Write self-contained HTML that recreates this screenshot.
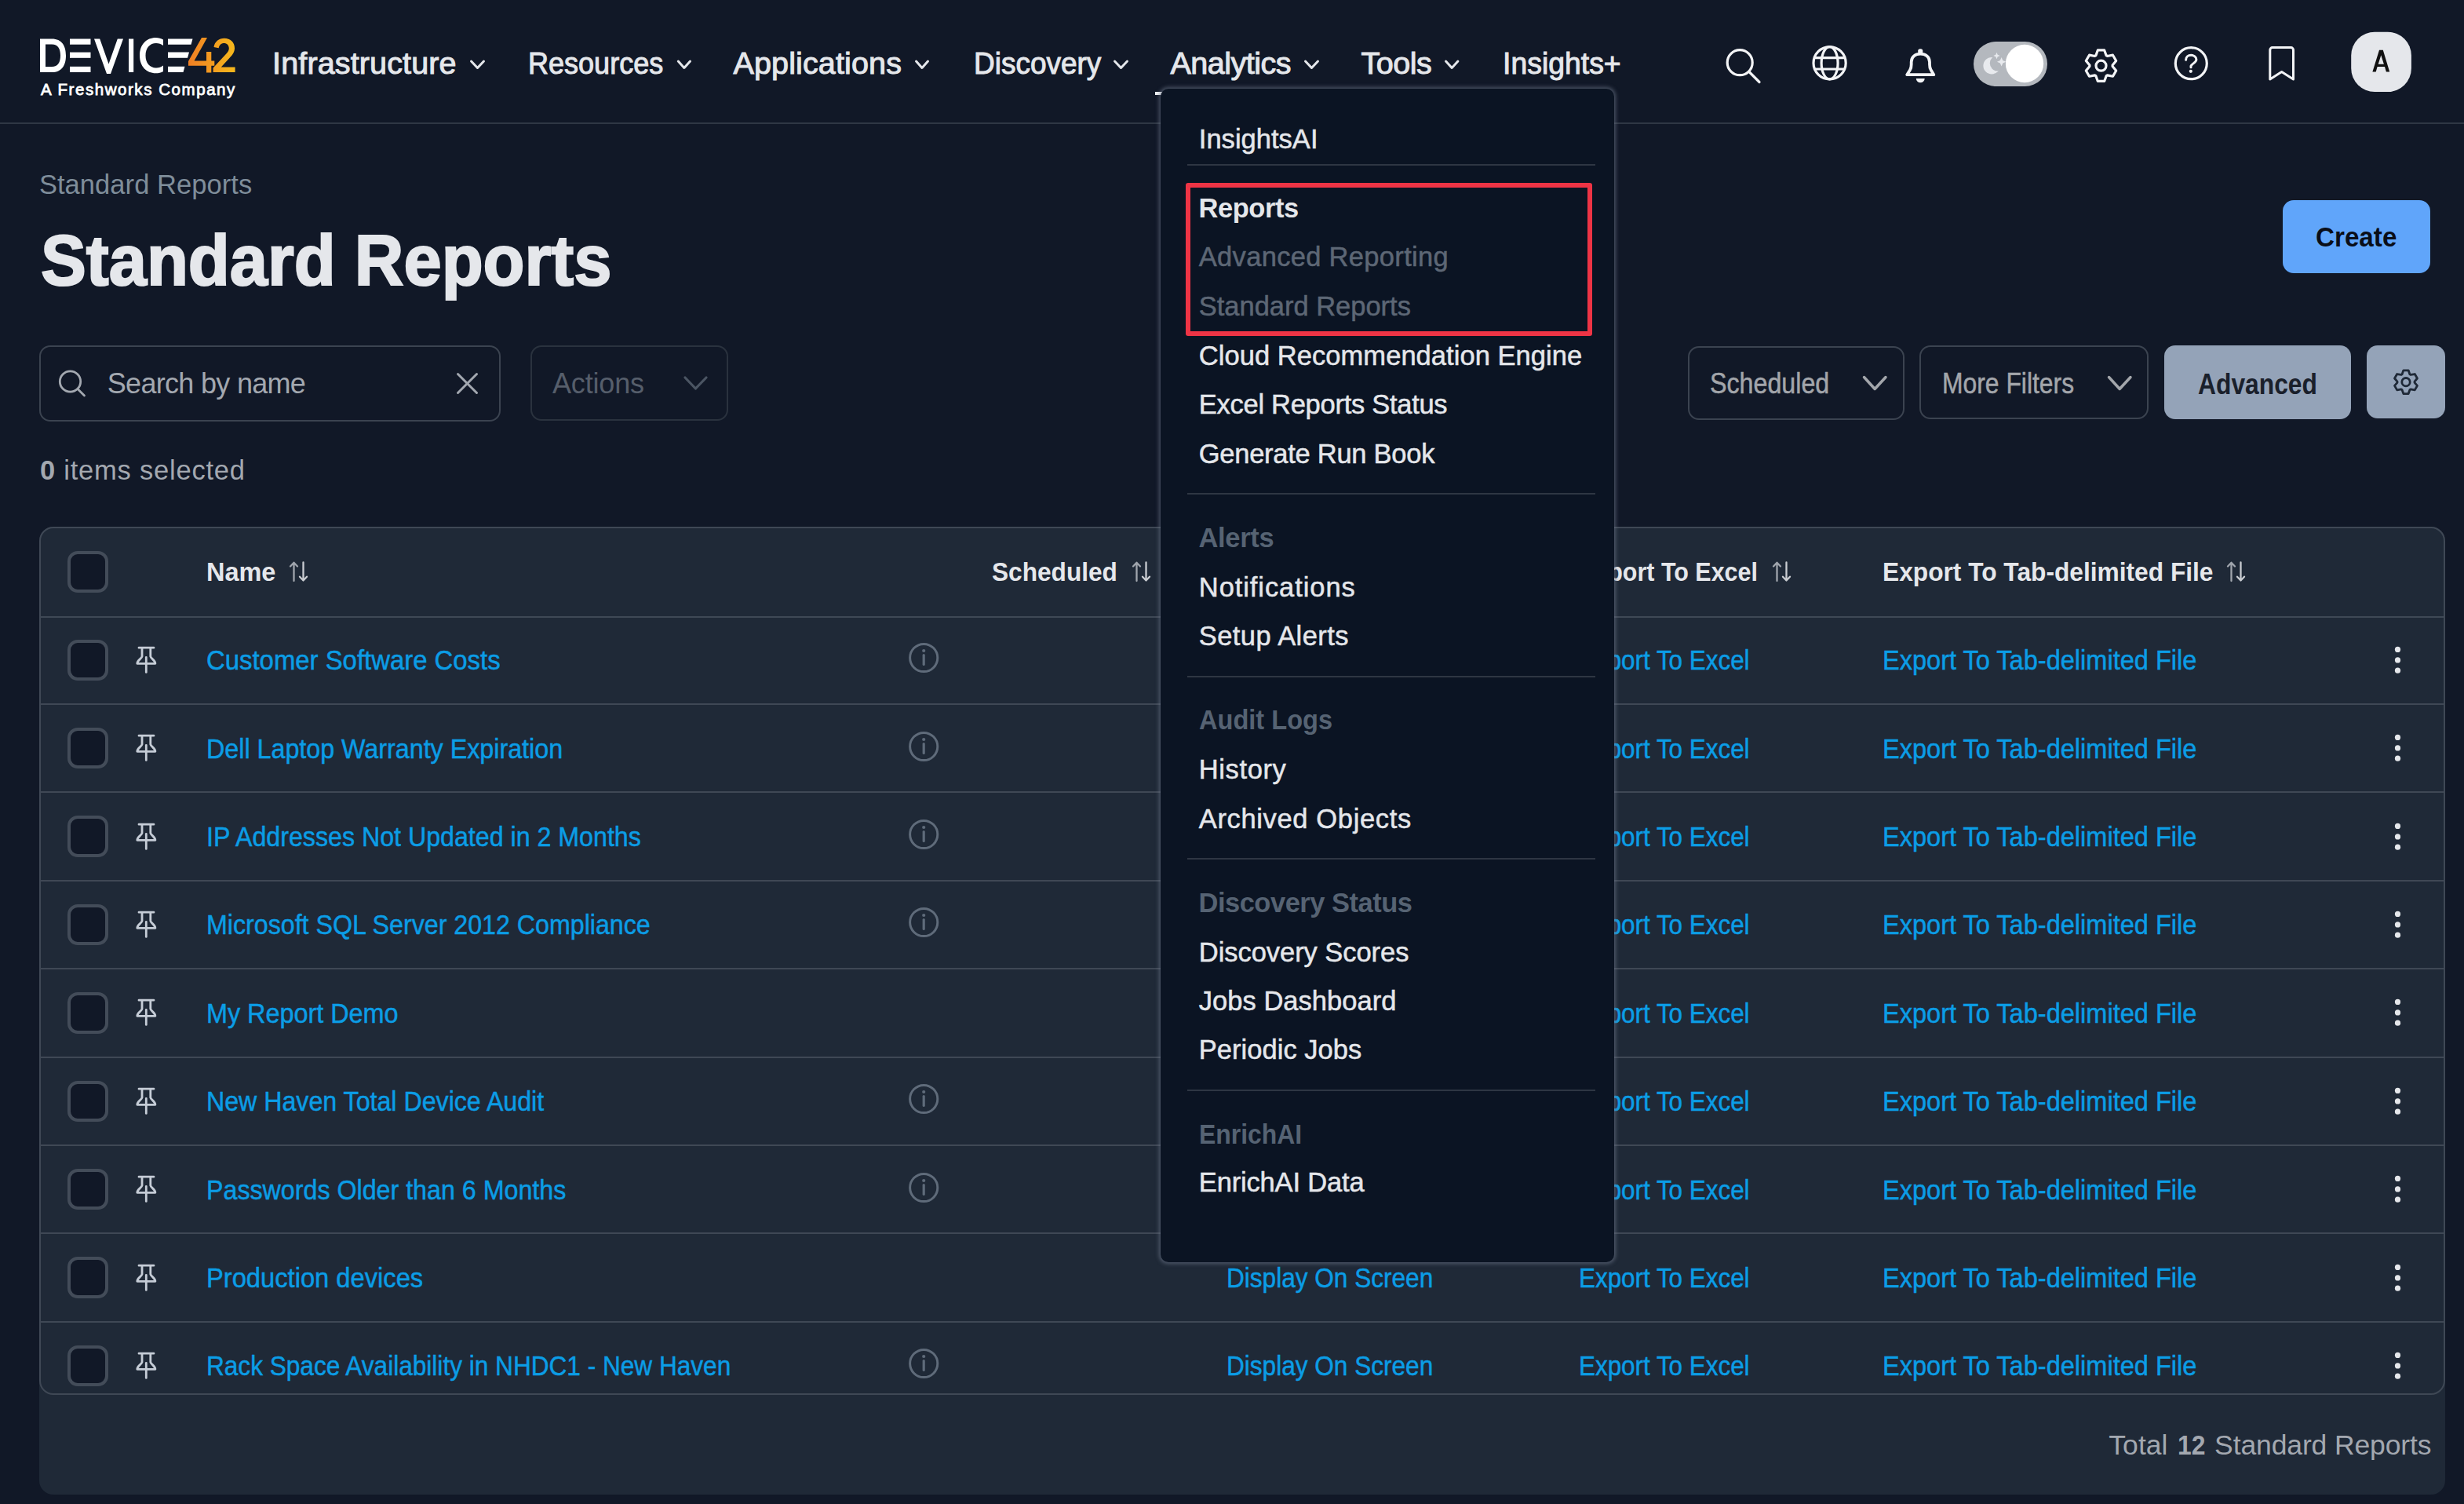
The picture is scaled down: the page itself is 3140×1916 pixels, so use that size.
<!DOCTYPE html>
<html><head><meta charset="utf-8"><title>Standard Reports</title>
<style>
html,body{margin:0;padding:0}
body{width:3140px;height:1916px;overflow:hidden;position:relative;background:#111827;font-family:"Liberation Sans",sans-serif}
.t{position:absolute;white-space:nowrap}
.a{position:absolute}
svg.a{overflow:visible}
</style></head><body>
<div style="position:absolute;left:0;top:156px;width:3140px;height:2px;background:#2f3744"></div>
<svg style="position:absolute;left:0;top:0" width="320" height="140" viewBox="0 0 320 140">
<defs><linearGradient id="lg" x1="0" y1="0" x2="1" y2="0"><stop offset="0" stop-color="#f07f24"/><stop offset="1" stop-color="#f6b81c"/></linearGradient></defs>
<path fill="#fff" d="M51 49.5h15c13 0 18 9 18 21.2s-5 21.3-18 21.3H51zM58 56.5v28.5h8c8 0 11-6 11-14.3s-3-14.2-11-14.2z"/>
<rect fill="#fff" x="89" y="49.5" width="26.5" height="7.2"/><rect fill="#fff" x="89" y="66.6" width="26.5" height="7.2"/><rect fill="#fff" x="89" y="84.8" width="26.5" height="7.2"/>
<path fill="#fff" d="M120 49.5h7.2l11.3 32 11.3-32h7.2l-16 44.5h-5z"/>
<rect fill="#fff" x="164" y="49.5" width="6.2" height="42.5"/>
<path fill="#fff" d="M208 50.5c-2.5-1.5-6-2.5-9.5-2.5c-12 0-20.5 9-20.5 22.7s8.5 22.5 20.5 22.5c3.5 0 7-.8 9.5-2.3v-7.5c-2.5 2-5.8 3-9 3c-8 0-13.5-6-13.5-15.7s5.5-15.8 13.5-15.8c3.2 0 6.5 1 9 3z"/>
<path fill="#fff" d="M214 49.5h31.5l-2 7.2H214zM214 66.6h27l-2 7.2h-25zM214 84.8h21.5l-2 7.2H214z"/>
<path fill="url(#lg)" d="M257 48h7l-16.5 29.5h15.5v-11.5h6.3v11.5h4v6.3h-4v8.7h-6.3v-8.7h-23v-5.8zM272.5 60c1-7 6.5-11.3 13.3-11.3c7.7 0 13.2 5 13.2 12.5c0 5-2.5 8.5-6.2 12.2l-11 12h17.8v6.6h-28v-5.4l16.5-17.8c2.3-2.5 3.7-4.5 3.7-7.3c0-4-2.8-6.6-6.3-6.6c-3.8 0-6.2 2.5-6.8 6.3z"/>
</svg>
<div class="t" style="left:52.1px;top:100.6px;font-size:20.5px;line-height:26px;color:#ffffff;font-weight:400;letter-spacing:1.56px;-webkit-text-stroke:0.8px #ffffff;">A Freshworks Company</div>
<div class="t" style="left:347.1px;top:55.8px;font-size:39.5px;line-height:49px;color:#e5e7eb;font-weight:400;letter-spacing:0.13px;-webkit-text-stroke:1.0px #e5e7eb;">Infrastructure</div>
<div class="t" style="left:673.4px;top:55.8px;font-size:39.5px;line-height:49px;color:#e5e7eb;font-weight:400;letter-spacing:0.00px;transform:scaleX(0.9123);transform-origin:0 0;-webkit-text-stroke:1.0px #e5e7eb;">Resources</div>
<div class="t" style="left:934.5px;top:55.8px;font-size:39.5px;line-height:49px;color:#e5e7eb;font-weight:400;letter-spacing:0.13px;-webkit-text-stroke:1.0px #e5e7eb;">Applications</div>
<div class="t" style="left:1240.5px;top:55.8px;font-size:39.5px;line-height:49px;color:#e5e7eb;font-weight:400;letter-spacing:0.00px;transform:scaleX(0.9364);transform-origin:0 0;-webkit-text-stroke:1.0px #e5e7eb;">Discovery</div>
<div class="t" style="left:1491.5px;top:55.8px;font-size:39.5px;line-height:49px;color:#e5e7eb;font-weight:400;letter-spacing:-0.50px;-webkit-text-stroke:1.0px #e5e7eb;">Analytics</div>
<div class="t" style="left:1734.5px;top:55.8px;font-size:39.5px;line-height:49px;color:#e5e7eb;font-weight:400;letter-spacing:-0.49px;-webkit-text-stroke:1.0px #e5e7eb;">Tools</div>
<div class="t" style="left:1915.2px;top:55.8px;font-size:39.5px;line-height:49px;color:#e5e7eb;font-weight:400;letter-spacing:0.00px;transform:scaleX(0.9466);transform-origin:0 0;-webkit-text-stroke:1.0px #e5e7eb;">Insights+</div>
<svg class="a" style="left:0;top:0" width="3140" height="160"><g fill="none" stroke="#e5e7eb" stroke-width="3" stroke-linecap="round" stroke-linejoin="round"><polyline points="600.5,78 608.5,86.5 616.5,78"/><polyline points="864.3,78 871.9,86.5 879.5,78"/><polyline points="1167.5,78 1175.0,86.5 1182.5,78"/><polyline points="1420.5,78 1428.5,86.5 1436.5,78"/><polyline points="1663.5,78 1671.5,86.5 1679.5,78"/><polyline points="1842.5,78 1850.2,86.5 1857.9,78"/></g></svg>
<div class="a" style="left:1472px;top:117px;width:200px;height:4px;background:#f3f4f6"></div>
<svg class="a" style="left:2100px;top:0" width="1040" height="160" viewBox="2100 0 1040 160">
<g fill="none" stroke="#f3f4f6" stroke-width="3.2" stroke-linecap="round" stroke-linejoin="round">
<circle cx="2217.2" cy="79.7" r="16"/><line x1="2229.5" y1="92" x2="2242" y2="104.5"/>
<circle cx="2331.6" cy="80.3" r="20.6"/><ellipse cx="2331.6" cy="80.3" rx="10.5" ry="20.6"/>
<line x1="2313.5" y1="73.6" x2="2349.7" y2="73.6"/><line x1="2313.5" y1="88" x2="2349.7" y2="88"/>
<path d="M2430.2 95.2H2464.3L2460.6 89C2459.3 87 2459 85 2459 82V79C2459 72.5 2454 68.6 2447.3 68.6C2440.6 68.6 2435.7 72.5 2435.7 79V82C2435.7 85 2435.4 87 2434.1 89Z" stroke-width="3.8"/>
<path d="M2670.87 70.69 L2673.30 63.94 L2681.70 63.94 L2684.13 70.69 L2685.45 71.46 L2692.51 70.18 L2696.71 77.46 L2692.08 82.94 L2692.08 84.46 L2696.71 89.94 L2692.51 97.22 L2685.45 95.94 L2684.13 96.71 L2681.70 103.46 L2673.30 103.46 L2670.87 96.71 L2669.55 95.94 L2662.49 97.22 L2658.29 89.94 L2662.92 84.46 L2662.92 82.94 L2658.29 77.46 L2662.49 70.18 L2669.55 71.46Z"/>
<circle cx="2677.5" cy="83.7" r="6.5"/>
<circle cx="2792.3" cy="80.7" r="20"/>
<path d="M2785.6 76.2c0-3.6 2.9-5.9 6.6-5.9s6.7 2.4 6.7 5.5c0 4-5.2 4.8-6.9 8.3v1.6" stroke-width="3"/>
<path d="M2892.8 101V63.6a3 3 0 0 1 3-3h23.7a3 3 0 0 1 3 3V101l-14.85-9.6z" stroke-width="3"/>
</g>
<rect fill="#f3f4f6" x="2444.2" y="62.2" width="6.1" height="6.5" rx="2.6"/>
<path fill="#f3f4f6" d="M2441.8 99.9H2452.7A5.45 5.45 0 0 1 2441.8 99.9Z"/>
<circle fill="#f3f4f6" cx="2791.8" cy="90.8" r="2.1"/>
<rect x="2515" y="53" width="94" height="57" rx="28.5" fill="#b4b8be"/>
<circle cx="2580" cy="81" r="24.2" fill="#ffffff"/>
<circle fill="#e8eaee" cx="2538.2" cy="83.7" r="10.8"/><circle fill="#b4b8be" cx="2545.8" cy="80.6" r="10"/>
<path fill="#e8eaee" d="M2544.5 66.8l1.2 3 3 1.2-3 1.2-1.2 3-1.2-3-3-1.2 3-1.2z"/>
<path fill="#e8eaee" d="M2550.6 73l1.7 4 4 1.7-4 1.7-1.7 4-1.7-4-4-1.7 4-1.7z"/>
<rect x="2996.2" y="40.7" width="76.7" height="76.3" rx="30" fill="#e5e7eb"/>
</svg>
<svg class="a" style="left:0;top:0" width="3140" height="160"><path fill="#111111" fill-rule="evenodd" d="M3023.4 91.4L3032 63.8H3036.8L3045.2 91.4H3040.9L3039 85H3029.6L3027.7 91.4ZM3030.7 81.8H3037.9L3034.3 70.2Z"/></svg>
<div class="t" style="left:49.9px;top:214.3px;font-size:34.5px;line-height:43px;color:#7f8d9a;font-weight:400;letter-spacing:0.06px;">Standard Reports</div>
<div class="t" style="left:51.8px;top:275.0px;font-size:91px;line-height:114px;color:#e5e7eb;font-weight:700;letter-spacing:0.00px;transform:scaleX(0.9527);transform-origin:0 0;-webkit-text-stroke:2.2px #e5e7eb;">Standard Reports</div>
<div class="a" style="left:2909px;top:255px;width:188px;height:93px;border-radius:14px;background:#60a5fa"></div>
<div class="t" style="left:2951.0px;top:279.7px;font-size:35px;line-height:44px;color:#0a0e18;font-weight:700;letter-spacing:0.00px;transform:scaleX(0.9486);transform-origin:0 0;">Create</div>
<div class="a" style="left:50px;top:440px;width:584px;height:93px;border:2px solid #3b4350;border-radius:14px;background:#111827"></div>
<svg class="a" style="left:0;top:400px" width="1000" height="160" viewBox="0 400 1000 160"><g fill="none" stroke-linecap="round" stroke-linejoin="round">
<circle cx="89.5" cy="486" r="13.2" stroke="#a3a8b0" stroke-width="2.8"/><line x1="99" y1="495.5" x2="107.5" y2="504" stroke="#a3a8b0" stroke-width="2.8"/>
<line x1="583.5" y1="476.5" x2="607.5" y2="500.5" stroke="#a3a8b0" stroke-width="3"/><line x1="607.5" y1="476.5" x2="583.5" y2="500.5" stroke="#a3a8b0" stroke-width="3"/>
<polyline points="873,481 886.4,495 900,481" stroke="#4b5563" stroke-width="3.2"/>
</g></svg>
<div class="t" style="left:136.8px;top:466.2px;font-size:36px;line-height:45px;color:#a3a8b0;font-weight:400;letter-spacing:-0.70px;">Search by name</div>
<div class="a" style="left:676px;top:440px;width:248px;height:92px;border:2px solid #2a323e;border-radius:14px"></div>
<div class="t" style="left:704.0px;top:466.0px;font-size:36px;line-height:45px;color:#565e6b;font-weight:400;letter-spacing:-0.18px;">Actions</div>
<div class="a" style="left:2151px;top:441px;width:272px;height:90px;border:2px solid #3b4350;border-radius:14px"></div>
<div class="t" style="left:2179.2px;top:465.8px;font-size:36.5px;line-height:46px;color:#a3a6ab;font-weight:400;letter-spacing:0.00px;transform:scaleX(0.8827);transform-origin:0 0;-webkit-text-stroke:0.5px #a3a6ab;">Scheduled</div>
<div class="a" style="left:2446px;top:440px;width:288px;height:89.5px;border:2px solid #3b4350;border-radius:14px"></div>
<div class="t" style="left:2475.2px;top:465.8px;font-size:36.5px;line-height:46px;color:#a3a6ab;font-weight:400;letter-spacing:0.00px;transform:scaleX(0.8724);transform-origin:0 0;-webkit-text-stroke:0.5px #a3a6ab;">More Filters</div>
<svg class="a" style="left:2300px;top:400px" width="840" height="160" viewBox="2300 400 840 160"><g fill="none" stroke="#a3a6ab" stroke-width="3.5" stroke-linecap="round" stroke-linejoin="round">
<polyline points="2375.5,480.5 2389.2,495.5 2403,480.5"/><polyline points="2687.5,480.5 2701.2,495.5 2715,480.5"/></g>
<rect x="2758" y="440" width="238" height="94" rx="14" fill="#94a3b8"/>
<rect x="3016" y="440" width="100" height="93" rx="14" fill="#94a3b8"/>
<g fill="none" stroke="#1f2937" stroke-width="2.8" stroke-linejoin="round">
<path d="M3061.01 476.90 L3062.84 471.83 L3069.16 471.83 L3070.99 476.90 L3071.99 477.47 L3077.30 476.53 L3080.46 482.00 L3076.98 486.12 L3076.98 487.28 L3080.46 491.40 L3077.30 496.87 L3071.99 495.93 L3070.99 496.50 L3069.16 501.57 L3062.84 501.57 L3061.01 496.50 L3060.01 495.93 L3054.70 496.87 L3051.54 491.40 L3055.02 487.28 L3055.02 486.12 L3051.54 482.00 L3054.70 476.53 L3060.01 477.47Z"/>
<circle cx="3066" cy="486.7" r="5.2"/></g>
</svg>
<div class="t" style="left:2801.4px;top:466.5px;font-size:36px;line-height:45px;color:#1a202b;font-weight:700;letter-spacing:0.00px;transform:scaleX(0.8831);transform-origin:0 0;">Advanced</div>
<div class="t" style="left:51.0px;top:578.0px;font-size:34.5px;line-height:43px;color:#a3a8b0;font-weight:700;letter-spacing:0.00px;">0</div>
<div class="t" style="left:81.2px;top:578.0px;font-size:34.5px;line-height:43px;color:#a3a8b0;font-weight:400;letter-spacing:0.79px;">items selected</div>
<div class="a" style="left:50px;top:671px;width:3066px;height:1233px;border-radius:18px;background:#1f2937"></div>
<div class="a" style="left:50px;top:671px;width:3062px;height:1102px;border:2px solid #3f4855;border-radius:18px"></div>
<div class="a" style="left:52px;top:785px;width:3062px;height:2px;background:#3f4855"></div>
<div class="a" style="left:52px;top:896.0px;width:3062px;height:2px;background:#3f4855"></div>
<div class="a" style="left:52px;top:1008.4px;width:3062px;height:2px;background:#3f4855"></div>
<div class="a" style="left:52px;top:1120.8px;width:3062px;height:2px;background:#3f4855"></div>
<div class="a" style="left:52px;top:1233.2px;width:3062px;height:2px;background:#3f4855"></div>
<div class="a" style="left:52px;top:1345.6px;width:3062px;height:2px;background:#3f4855"></div>
<div class="a" style="left:52px;top:1458.0px;width:3062px;height:2px;background:#3f4855"></div>
<div class="a" style="left:52px;top:1570.4px;width:3062px;height:2px;background:#3f4855"></div>
<div class="a" style="left:52px;top:1682.8px;width:3062px;height:2px;background:#3f4855"></div>
<div class="a" style="left:85.5px;top:702.3px;width:44.5px;height:44.5px;border:4px solid #434c59;border-radius:13px;background:#111827"></div>
<div class="t" style="left:262.5px;top:707.2px;font-size:34px;line-height:42px;color:#e5e7eb;font-weight:700;letter-spacing:0.00px;transform:scaleX(0.9546);transform-origin:0 0;">Name</div>
<div class="t" style="left:1264.0px;top:707.2px;font-size:34px;line-height:42px;color:#e5e7eb;font-weight:700;letter-spacing:0.00px;transform:scaleX(0.9302);transform-origin:0 0;">Scheduled</div>
<div class="t" style="left:1563.0px;top:707.2px;font-size:34px;line-height:42px;color:#e5e7eb;font-weight:700;letter-spacing:-0.84px;">Display On Screen</div>
<div class="t" style="left:2012.0px;top:707.2px;font-size:34px;line-height:42px;color:#e5e7eb;font-weight:700;letter-spacing:0.00px;transform:scaleX(0.8959);transform-origin:0 0;">Export To Excel</div>
<div class="t" style="left:2399.0px;top:707.2px;font-size:34px;line-height:42px;color:#e5e7eb;font-weight:700;letter-spacing:0.00px;transform:scaleX(0.9323);transform-origin:0 0;">Export To Tab-delimited File</div>
<svg class="a" style="left:365px;top:710px" width="32" height="36" viewBox="0 0 32 36"><g fill="none" stroke-width="2.3" stroke-linecap="round" stroke-linejoin="round"><path d="M9.5 30V7M5 11.5l4.5-4.8 4.5 4.8" stroke="#a0a5ad"/><path d="M21.5 6.5V29.5M17 24.7l4.5 4.8 4.5-4.8" stroke="#c9ccd1"/></g></svg>
<svg class="a" style="left:1438.5px;top:710px" width="32" height="36" viewBox="0 0 32 36"><g fill="none" stroke-width="2.3" stroke-linecap="round" stroke-linejoin="round"><path d="M9.5 30V7M5 11.5l4.5-4.8 4.5 4.8" stroke="#a0a5ad"/><path d="M21.5 6.5V29.5M17 24.7l4.5 4.8 4.5-4.8" stroke="#c9ccd1"/></g></svg>
<svg class="a" style="left:2255px;top:710px" width="32" height="36" viewBox="0 0 32 36"><g fill="none" stroke-width="2.3" stroke-linecap="round" stroke-linejoin="round"><path d="M9.5 30V7M5 11.5l4.5-4.8 4.5 4.8" stroke="#a0a5ad"/><path d="M21.5 6.5V29.5M17 24.7l4.5 4.8 4.5-4.8" stroke="#c9ccd1"/></g></svg>
<svg class="a" style="left:2834px;top:710px" width="32" height="36" viewBox="0 0 32 36"><g fill="none" stroke-width="2.3" stroke-linecap="round" stroke-linejoin="round"><path d="M9.5 30V7M5 11.5l4.5-4.8 4.5 4.8" stroke="#a0a5ad"/><path d="M21.5 6.5V29.5M17 24.7l4.5 4.8 4.5-4.8" stroke="#c9ccd1"/></g></svg>
<div class="a" style="left:85.5px;top:814.5px;width:44.5px;height:44.5px;border:4px solid #434c59;border-radius:13px;background:#111827"></div>
<svg class="a" style="left:168px;top:818.8px" width="36" height="44" viewBox="0 0 36 44"><g fill="none" stroke="#c5ccd6" stroke-width="2.8" stroke-linecap="round" stroke-linejoin="round"><path d="M9 6.2H28M13 6.2V17.3C12.6 20 6.8 22 6.8 26.3H29.9C29.9 22 24.2 20 23.8 17.3V6.2M18.3 18.3V37.4"/></g></svg>
<div class="t" style="left:262.5px;top:819.2px;font-size:35px;line-height:44px;color:#0b9de6;font-weight:400;letter-spacing:0.00px;transform:scaleX(0.9395);transform-origin:0 0;-webkit-text-stroke:0.5px #0b9de6;">Customer Software Costs</div>
<svg class="a" style="left:1155px;top:816.2px" width="44" height="44" viewBox="0 0 44 44"><circle cx="22.2" cy="22" r="17.6" fill="none" stroke="#5f6b7a" stroke-width="3"/><circle cx="22.2" cy="13" r="2.1" fill="#5f6b7a"/><line x1="22.2" y1="18.5" x2="22.2" y2="30.5" stroke="#5f6b7a" stroke-width="3.2" stroke-linecap="round"/></svg>
<div class="t" style="left:1563.2px;top:819.2px;font-size:35px;line-height:44px;color:#0b9de6;font-weight:400;letter-spacing:0.00px;transform:scaleX(0.9020);transform-origin:0 0;-webkit-text-stroke:0.5px #0b9de6;">Display On Screen</div>
<div class="t" style="left:2012.0px;top:819.2px;font-size:35px;line-height:44px;color:#0b9de6;font-weight:400;letter-spacing:0.00px;transform:scaleX(0.8971);transform-origin:0 0;-webkit-text-stroke:0.5px #0b9de6;">Export To Excel</div>
<div class="t" style="left:2399.2px;top:819.2px;font-size:35px;line-height:44px;color:#0b9de6;font-weight:400;letter-spacing:0.00px;transform:scaleX(0.9299);transform-origin:0 0;-webkit-text-stroke:0.5px #0b9de6;">Export To Tab-delimited File</div>
<svg class="a" style="left:3045px;top:820.8px" width="22" height="40" viewBox="0 0 22 40"><g fill="#e5e7eb"><circle cx="10.5" cy="6.4" r="3.6"/><circle cx="10.5" cy="19.9" r="3.6"/><circle cx="10.5" cy="33.2" r="3.6"/></g></svg>
<div class="a" style="left:85.5px;top:926.9px;width:44.5px;height:44.5px;border:4px solid #434c59;border-radius:13px;background:#111827"></div>
<svg class="a" style="left:168px;top:931.2px" width="36" height="44" viewBox="0 0 36 44"><g fill="none" stroke="#c5ccd6" stroke-width="2.8" stroke-linecap="round" stroke-linejoin="round"><path d="M9 6.2H28M13 6.2V17.3C12.6 20 6.8 22 6.8 26.3H29.9C29.9 22 24.2 20 23.8 17.3V6.2M18.3 18.3V37.4"/></g></svg>
<div class="t" style="left:262.5px;top:931.6px;font-size:35px;line-height:44px;color:#0b9de6;font-weight:400;letter-spacing:0.00px;transform:scaleX(0.9214);transform-origin:0 0;-webkit-text-stroke:0.5px #0b9de6;">Dell Laptop Warranty Expiration</div>
<svg class="a" style="left:1155px;top:928.6px" width="44" height="44" viewBox="0 0 44 44"><circle cx="22.2" cy="22" r="17.6" fill="none" stroke="#5f6b7a" stroke-width="3"/><circle cx="22.2" cy="13" r="2.1" fill="#5f6b7a"/><line x1="22.2" y1="18.5" x2="22.2" y2="30.5" stroke="#5f6b7a" stroke-width="3.2" stroke-linecap="round"/></svg>
<div class="t" style="left:1563.2px;top:931.6px;font-size:35px;line-height:44px;color:#0b9de6;font-weight:400;letter-spacing:0.00px;transform:scaleX(0.9020);transform-origin:0 0;-webkit-text-stroke:0.5px #0b9de6;">Display On Screen</div>
<div class="t" style="left:2012.0px;top:931.6px;font-size:35px;line-height:44px;color:#0b9de6;font-weight:400;letter-spacing:0.00px;transform:scaleX(0.8971);transform-origin:0 0;-webkit-text-stroke:0.5px #0b9de6;">Export To Excel</div>
<div class="t" style="left:2399.2px;top:931.6px;font-size:35px;line-height:44px;color:#0b9de6;font-weight:400;letter-spacing:0.00px;transform:scaleX(0.9299);transform-origin:0 0;-webkit-text-stroke:0.5px #0b9de6;">Export To Tab-delimited File</div>
<svg class="a" style="left:3045px;top:933.2px" width="22" height="40" viewBox="0 0 22 40"><g fill="#e5e7eb"><circle cx="10.5" cy="6.4" r="3.6"/><circle cx="10.5" cy="19.9" r="3.6"/><circle cx="10.5" cy="33.2" r="3.6"/></g></svg>
<div class="a" style="left:85.5px;top:1039.3px;width:44.5px;height:44.5px;border:4px solid #434c59;border-radius:13px;background:#111827"></div>
<svg class="a" style="left:168px;top:1043.6px" width="36" height="44" viewBox="0 0 36 44"><g fill="none" stroke="#c5ccd6" stroke-width="2.8" stroke-linecap="round" stroke-linejoin="round"><path d="M9 6.2H28M13 6.2V17.3C12.6 20 6.8 22 6.8 26.3H29.9C29.9 22 24.2 20 23.8 17.3V6.2M18.3 18.3V37.4"/></g></svg>
<div class="t" style="left:262.5px;top:1044.0px;font-size:35px;line-height:44px;color:#0b9de6;font-weight:400;letter-spacing:0.00px;transform:scaleX(0.9192);transform-origin:0 0;-webkit-text-stroke:0.5px #0b9de6;">IP Addresses Not Updated in 2 Months</div>
<svg class="a" style="left:1155px;top:1041.0px" width="44" height="44" viewBox="0 0 44 44"><circle cx="22.2" cy="22" r="17.6" fill="none" stroke="#5f6b7a" stroke-width="3"/><circle cx="22.2" cy="13" r="2.1" fill="#5f6b7a"/><line x1="22.2" y1="18.5" x2="22.2" y2="30.5" stroke="#5f6b7a" stroke-width="3.2" stroke-linecap="round"/></svg>
<div class="t" style="left:1563.2px;top:1044.0px;font-size:35px;line-height:44px;color:#0b9de6;font-weight:400;letter-spacing:0.00px;transform:scaleX(0.9020);transform-origin:0 0;-webkit-text-stroke:0.5px #0b9de6;">Display On Screen</div>
<div class="t" style="left:2012.0px;top:1044.0px;font-size:35px;line-height:44px;color:#0b9de6;font-weight:400;letter-spacing:0.00px;transform:scaleX(0.8971);transform-origin:0 0;-webkit-text-stroke:0.5px #0b9de6;">Export To Excel</div>
<div class="t" style="left:2399.2px;top:1044.0px;font-size:35px;line-height:44px;color:#0b9de6;font-weight:400;letter-spacing:0.00px;transform:scaleX(0.9299);transform-origin:0 0;-webkit-text-stroke:0.5px #0b9de6;">Export To Tab-delimited File</div>
<svg class="a" style="left:3045px;top:1045.6px" width="22" height="40" viewBox="0 0 22 40"><g fill="#e5e7eb"><circle cx="10.5" cy="6.4" r="3.6"/><circle cx="10.5" cy="19.9" r="3.6"/><circle cx="10.5" cy="33.2" r="3.6"/></g></svg>
<div class="a" style="left:85.5px;top:1151.7px;width:44.5px;height:44.5px;border:4px solid #434c59;border-radius:13px;background:#111827"></div>
<svg class="a" style="left:168px;top:1156.0px" width="36" height="44" viewBox="0 0 36 44"><g fill="none" stroke="#c5ccd6" stroke-width="2.8" stroke-linecap="round" stroke-linejoin="round"><path d="M9 6.2H28M13 6.2V17.3C12.6 20 6.8 22 6.8 26.3H29.9C29.9 22 24.2 20 23.8 17.3V6.2M18.3 18.3V37.4"/></g></svg>
<div class="t" style="left:262.5px;top:1156.4px;font-size:35px;line-height:44px;color:#0b9de6;font-weight:400;letter-spacing:0.00px;transform:scaleX(0.9194);transform-origin:0 0;-webkit-text-stroke:0.5px #0b9de6;">Microsoft SQL Server 2012 Compliance</div>
<svg class="a" style="left:1155px;top:1153.4px" width="44" height="44" viewBox="0 0 44 44"><circle cx="22.2" cy="22" r="17.6" fill="none" stroke="#5f6b7a" stroke-width="3"/><circle cx="22.2" cy="13" r="2.1" fill="#5f6b7a"/><line x1="22.2" y1="18.5" x2="22.2" y2="30.5" stroke="#5f6b7a" stroke-width="3.2" stroke-linecap="round"/></svg>
<div class="t" style="left:1563.2px;top:1156.4px;font-size:35px;line-height:44px;color:#0b9de6;font-weight:400;letter-spacing:0.00px;transform:scaleX(0.9020);transform-origin:0 0;-webkit-text-stroke:0.5px #0b9de6;">Display On Screen</div>
<div class="t" style="left:2012.0px;top:1156.4px;font-size:35px;line-height:44px;color:#0b9de6;font-weight:400;letter-spacing:0.00px;transform:scaleX(0.8971);transform-origin:0 0;-webkit-text-stroke:0.5px #0b9de6;">Export To Excel</div>
<div class="t" style="left:2399.2px;top:1156.4px;font-size:35px;line-height:44px;color:#0b9de6;font-weight:400;letter-spacing:0.00px;transform:scaleX(0.9299);transform-origin:0 0;-webkit-text-stroke:0.5px #0b9de6;">Export To Tab-delimited File</div>
<svg class="a" style="left:3045px;top:1158.0px" width="22" height="40" viewBox="0 0 22 40"><g fill="#e5e7eb"><circle cx="10.5" cy="6.4" r="3.6"/><circle cx="10.5" cy="19.9" r="3.6"/><circle cx="10.5" cy="33.2" r="3.6"/></g></svg>
<div class="a" style="left:85.5px;top:1264.1px;width:44.5px;height:44.5px;border:4px solid #434c59;border-radius:13px;background:#111827"></div>
<svg class="a" style="left:168px;top:1268.4px" width="36" height="44" viewBox="0 0 36 44"><g fill="none" stroke="#c5ccd6" stroke-width="2.8" stroke-linecap="round" stroke-linejoin="round"><path d="M9 6.2H28M13 6.2V17.3C12.6 20 6.8 22 6.8 26.3H29.9C29.9 22 24.2 20 23.8 17.3V6.2M18.3 18.3V37.4"/></g></svg>
<div class="t" style="left:262.5px;top:1268.8px;font-size:35px;line-height:44px;color:#0b9de6;font-weight:400;letter-spacing:0.00px;transform:scaleX(0.9245);transform-origin:0 0;-webkit-text-stroke:0.5px #0b9de6;">My Report Demo</div>
<div class="t" style="left:1563.2px;top:1268.8px;font-size:35px;line-height:44px;color:#0b9de6;font-weight:400;letter-spacing:0.00px;transform:scaleX(0.9020);transform-origin:0 0;-webkit-text-stroke:0.5px #0b9de6;">Display On Screen</div>
<div class="t" style="left:2012.0px;top:1268.8px;font-size:35px;line-height:44px;color:#0b9de6;font-weight:400;letter-spacing:0.00px;transform:scaleX(0.8971);transform-origin:0 0;-webkit-text-stroke:0.5px #0b9de6;">Export To Excel</div>
<div class="t" style="left:2399.2px;top:1268.8px;font-size:35px;line-height:44px;color:#0b9de6;font-weight:400;letter-spacing:0.00px;transform:scaleX(0.9299);transform-origin:0 0;-webkit-text-stroke:0.5px #0b9de6;">Export To Tab-delimited File</div>
<svg class="a" style="left:3045px;top:1270.4px" width="22" height="40" viewBox="0 0 22 40"><g fill="#e5e7eb"><circle cx="10.5" cy="6.4" r="3.6"/><circle cx="10.5" cy="19.9" r="3.6"/><circle cx="10.5" cy="33.2" r="3.6"/></g></svg>
<div class="a" style="left:85.5px;top:1376.5px;width:44.5px;height:44.5px;border:4px solid #434c59;border-radius:13px;background:#111827"></div>
<svg class="a" style="left:168px;top:1380.8px" width="36" height="44" viewBox="0 0 36 44"><g fill="none" stroke="#c5ccd6" stroke-width="2.8" stroke-linecap="round" stroke-linejoin="round"><path d="M9 6.2H28M13 6.2V17.3C12.6 20 6.8 22 6.8 26.3H29.9C29.9 22 24.2 20 23.8 17.3V6.2M18.3 18.3V37.4"/></g></svg>
<div class="t" style="left:262.5px;top:1381.2px;font-size:35px;line-height:44px;color:#0b9de6;font-weight:400;letter-spacing:0.00px;transform:scaleX(0.9188);transform-origin:0 0;-webkit-text-stroke:0.5px #0b9de6;">New Haven Total Device Audit</div>
<svg class="a" style="left:1155px;top:1378.2px" width="44" height="44" viewBox="0 0 44 44"><circle cx="22.2" cy="22" r="17.6" fill="none" stroke="#5f6b7a" stroke-width="3"/><circle cx="22.2" cy="13" r="2.1" fill="#5f6b7a"/><line x1="22.2" y1="18.5" x2="22.2" y2="30.5" stroke="#5f6b7a" stroke-width="3.2" stroke-linecap="round"/></svg>
<div class="t" style="left:1563.2px;top:1381.2px;font-size:35px;line-height:44px;color:#0b9de6;font-weight:400;letter-spacing:0.00px;transform:scaleX(0.9020);transform-origin:0 0;-webkit-text-stroke:0.5px #0b9de6;">Display On Screen</div>
<div class="t" style="left:2012.0px;top:1381.2px;font-size:35px;line-height:44px;color:#0b9de6;font-weight:400;letter-spacing:0.00px;transform:scaleX(0.8971);transform-origin:0 0;-webkit-text-stroke:0.5px #0b9de6;">Export To Excel</div>
<div class="t" style="left:2399.2px;top:1381.2px;font-size:35px;line-height:44px;color:#0b9de6;font-weight:400;letter-spacing:0.00px;transform:scaleX(0.9299);transform-origin:0 0;-webkit-text-stroke:0.5px #0b9de6;">Export To Tab-delimited File</div>
<svg class="a" style="left:3045px;top:1382.8px" width="22" height="40" viewBox="0 0 22 40"><g fill="#e5e7eb"><circle cx="10.5" cy="6.4" r="3.6"/><circle cx="10.5" cy="19.9" r="3.6"/><circle cx="10.5" cy="33.2" r="3.6"/></g></svg>
<div class="a" style="left:85.5px;top:1488.9px;width:44.5px;height:44.5px;border:4px solid #434c59;border-radius:13px;background:#111827"></div>
<svg class="a" style="left:168px;top:1493.2px" width="36" height="44" viewBox="0 0 36 44"><g fill="none" stroke="#c5ccd6" stroke-width="2.8" stroke-linecap="round" stroke-linejoin="round"><path d="M9 6.2H28M13 6.2V17.3C12.6 20 6.8 22 6.8 26.3H29.9C29.9 22 24.2 20 23.8 17.3V6.2M18.3 18.3V37.4"/></g></svg>
<div class="t" style="left:262.5px;top:1493.6px;font-size:35px;line-height:44px;color:#0b9de6;font-weight:400;letter-spacing:0.00px;transform:scaleX(0.9202);transform-origin:0 0;-webkit-text-stroke:0.5px #0b9de6;">Passwords Older than 6 Months</div>
<svg class="a" style="left:1155px;top:1490.6px" width="44" height="44" viewBox="0 0 44 44"><circle cx="22.2" cy="22" r="17.6" fill="none" stroke="#5f6b7a" stroke-width="3"/><circle cx="22.2" cy="13" r="2.1" fill="#5f6b7a"/><line x1="22.2" y1="18.5" x2="22.2" y2="30.5" stroke="#5f6b7a" stroke-width="3.2" stroke-linecap="round"/></svg>
<div class="t" style="left:1563.2px;top:1493.6px;font-size:35px;line-height:44px;color:#0b9de6;font-weight:400;letter-spacing:0.00px;transform:scaleX(0.9020);transform-origin:0 0;-webkit-text-stroke:0.5px #0b9de6;">Display On Screen</div>
<div class="t" style="left:2012.0px;top:1493.6px;font-size:35px;line-height:44px;color:#0b9de6;font-weight:400;letter-spacing:0.00px;transform:scaleX(0.8971);transform-origin:0 0;-webkit-text-stroke:0.5px #0b9de6;">Export To Excel</div>
<div class="t" style="left:2399.2px;top:1493.6px;font-size:35px;line-height:44px;color:#0b9de6;font-weight:400;letter-spacing:0.00px;transform:scaleX(0.9299);transform-origin:0 0;-webkit-text-stroke:0.5px #0b9de6;">Export To Tab-delimited File</div>
<svg class="a" style="left:3045px;top:1495.2px" width="22" height="40" viewBox="0 0 22 40"><g fill="#e5e7eb"><circle cx="10.5" cy="6.4" r="3.6"/><circle cx="10.5" cy="19.9" r="3.6"/><circle cx="10.5" cy="33.2" r="3.6"/></g></svg>
<div class="a" style="left:85.5px;top:1601.3px;width:44.5px;height:44.5px;border:4px solid #434c59;border-radius:13px;background:#111827"></div>
<svg class="a" style="left:168px;top:1605.6px" width="36" height="44" viewBox="0 0 36 44"><g fill="none" stroke="#c5ccd6" stroke-width="2.8" stroke-linecap="round" stroke-linejoin="round"><path d="M9 6.2H28M13 6.2V17.3C12.6 20 6.8 22 6.8 26.3H29.9C29.9 22 24.2 20 23.8 17.3V6.2M18.3 18.3V37.4"/></g></svg>
<div class="t" style="left:262.5px;top:1606.0px;font-size:35px;line-height:44px;color:#0b9de6;font-weight:400;letter-spacing:0.00px;transform:scaleX(0.9340);transform-origin:0 0;-webkit-text-stroke:0.5px #0b9de6;">Production devices</div>
<div class="t" style="left:1563.2px;top:1606.0px;font-size:35px;line-height:44px;color:#0b9de6;font-weight:400;letter-spacing:0.00px;transform:scaleX(0.9020);transform-origin:0 0;-webkit-text-stroke:0.5px #0b9de6;">Display On Screen</div>
<div class="t" style="left:2012.0px;top:1606.0px;font-size:35px;line-height:44px;color:#0b9de6;font-weight:400;letter-spacing:0.00px;transform:scaleX(0.8971);transform-origin:0 0;-webkit-text-stroke:0.5px #0b9de6;">Export To Excel</div>
<div class="t" style="left:2399.2px;top:1606.0px;font-size:35px;line-height:44px;color:#0b9de6;font-weight:400;letter-spacing:0.00px;transform:scaleX(0.9299);transform-origin:0 0;-webkit-text-stroke:0.5px #0b9de6;">Export To Tab-delimited File</div>
<svg class="a" style="left:3045px;top:1607.6px" width="22" height="40" viewBox="0 0 22 40"><g fill="#e5e7eb"><circle cx="10.5" cy="6.4" r="3.6"/><circle cx="10.5" cy="19.9" r="3.6"/><circle cx="10.5" cy="33.2" r="3.6"/></g></svg>
<div class="a" style="left:85.5px;top:1713.7px;width:44.5px;height:44.5px;border:4px solid #434c59;border-radius:13px;background:#111827"></div>
<svg class="a" style="left:168px;top:1718.0px" width="36" height="44" viewBox="0 0 36 44"><g fill="none" stroke="#c5ccd6" stroke-width="2.8" stroke-linecap="round" stroke-linejoin="round"><path d="M9 6.2H28M13 6.2V17.3C12.6 20 6.8 22 6.8 26.3H29.9C29.9 22 24.2 20 23.8 17.3V6.2M18.3 18.3V37.4"/></g></svg>
<div class="t" style="left:262.5px;top:1718.4px;font-size:35px;line-height:44px;color:#0b9de6;font-weight:400;letter-spacing:0.00px;transform:scaleX(0.9024);transform-origin:0 0;-webkit-text-stroke:0.5px #0b9de6;">Rack Space Availability in NHDC1 - New Haven</div>
<svg class="a" style="left:1155px;top:1715.4px" width="44" height="44" viewBox="0 0 44 44"><circle cx="22.2" cy="22" r="17.6" fill="none" stroke="#5f6b7a" stroke-width="3"/><circle cx="22.2" cy="13" r="2.1" fill="#5f6b7a"/><line x1="22.2" y1="18.5" x2="22.2" y2="30.5" stroke="#5f6b7a" stroke-width="3.2" stroke-linecap="round"/></svg>
<div class="t" style="left:1563.2px;top:1718.4px;font-size:35px;line-height:44px;color:#0b9de6;font-weight:400;letter-spacing:0.00px;transform:scaleX(0.9020);transform-origin:0 0;-webkit-text-stroke:0.5px #0b9de6;">Display On Screen</div>
<div class="t" style="left:2012.0px;top:1718.4px;font-size:35px;line-height:44px;color:#0b9de6;font-weight:400;letter-spacing:0.00px;transform:scaleX(0.8971);transform-origin:0 0;-webkit-text-stroke:0.5px #0b9de6;">Export To Excel</div>
<div class="t" style="left:2399.2px;top:1718.4px;font-size:35px;line-height:44px;color:#0b9de6;font-weight:400;letter-spacing:0.00px;transform:scaleX(0.9299);transform-origin:0 0;-webkit-text-stroke:0.5px #0b9de6;">Export To Tab-delimited File</div>
<svg class="a" style="left:3045px;top:1720.0px" width="22" height="40" viewBox="0 0 22 40"><g fill="#e5e7eb"><circle cx="10.5" cy="6.4" r="3.6"/><circle cx="10.5" cy="19.9" r="3.6"/><circle cx="10.5" cy="33.2" r="3.6"/></g></svg>
<div class="t" style="left:2687.3px;top:1818.7px;font-size:35.5px;line-height:44px;color:#a3a8b0;font-weight:400;letter-spacing:0.05px;">Total</div>
<div class="t" style="left:2774.8px;top:1818.7px;font-size:35.5px;line-height:44px;color:#a3a8b0;font-weight:700;letter-spacing:0.00px;transform:scaleX(0.8962);transform-origin:0 0;">12</div>
<div class="t" style="left:2822.1px;top:1818.7px;font-size:35.5px;line-height:44px;color:#a3a8b0;font-weight:400;letter-spacing:-0.12px;">Standard Reports</div>
<div class="a" style="left:1479px;top:113px;width:578px;height:1495px;border-radius:10px;background:#0b1423;box-shadow:0 0 5px 2px rgba(110,120,138,0.62)"></div>
<div class="a" style="left:1513px;top:208.5px;width:520px;height:2px;background:#2e3643"></div>
<div class="a" style="left:1513px;top:627.5px;width:520px;height:2px;background:#2e3643"></div>
<div class="a" style="left:1513px;top:860.7px;width:520px;height:2px;background:#2e3643"></div>
<div class="a" style="left:1513px;top:1092.7px;width:520px;height:2px;background:#2e3643"></div>
<div class="a" style="left:1513px;top:1387.8px;width:520px;height:2px;background:#2e3643"></div>
<div class="t" style="left:1527.8px;top:155.5px;font-size:34.5px;line-height:43px;color:#e5e7eb;font-weight:400;letter-spacing:0.02px;-webkit-text-stroke:0.5px #e5e7eb;">InsightsAI</div>
<div class="t" style="left:1527.5px;top:243.5px;font-size:34.5px;line-height:43px;color:#e5e7eb;font-weight:700;letter-spacing:-0.46px;">Reports</div>
<div class="t" style="left:1527.8px;top:306.4px;font-size:34.5px;line-height:43px;color:#5d6775;font-weight:400;letter-spacing:0.31px;-webkit-text-stroke:0.5px #5d6775;">Advanced Reporting</div>
<div class="t" style="left:1527.8px;top:369.2px;font-size:34.5px;line-height:43px;color:#5d6775;font-weight:400;letter-spacing:-0.02px;-webkit-text-stroke:0.5px #5d6775;">Standard Reports</div>
<div class="t" style="left:1527.8px;top:432.0px;font-size:34.5px;line-height:43px;color:#e5e7eb;font-weight:400;letter-spacing:0.05px;-webkit-text-stroke:0.5px #e5e7eb;">Cloud Recommendation Engine</div>
<div class="t" style="left:1527.8px;top:493.8px;font-size:34.5px;line-height:43px;color:#e5e7eb;font-weight:400;letter-spacing:-0.28px;-webkit-text-stroke:0.5px #e5e7eb;">Excel Reports Status</div>
<div class="t" style="left:1527.8px;top:556.5px;font-size:34.5px;line-height:43px;color:#e5e7eb;font-weight:400;letter-spacing:-0.27px;-webkit-text-stroke:0.5px #e5e7eb;">Generate Run Book</div>
<div class="t" style="left:1527.5px;top:663.5px;font-size:34.5px;line-height:43px;color:#566373;font-weight:700;letter-spacing:-0.33px;">Alerts</div>
<div class="t" style="left:1527.8px;top:726.8px;font-size:34.5px;line-height:43px;color:#e5e7eb;font-weight:400;letter-spacing:0.92px;-webkit-text-stroke:0.5px #e5e7eb;">Notifications</div>
<div class="t" style="left:1527.8px;top:788.5px;font-size:34.5px;line-height:43px;color:#e5e7eb;font-weight:400;letter-spacing:0.42px;-webkit-text-stroke:0.5px #e5e7eb;">Setup Alerts</div>
<div class="t" style="left:1527.5px;top:895.5px;font-size:34.5px;line-height:43px;color:#566373;font-weight:700;letter-spacing:0.00px;transform:scaleX(0.9442);transform-origin:0 0;">Audit Logs</div>
<div class="t" style="left:1527.8px;top:958.8px;font-size:34.5px;line-height:43px;color:#e5e7eb;font-weight:400;letter-spacing:0.61px;-webkit-text-stroke:0.5px #e5e7eb;">History</div>
<div class="t" style="left:1527.8px;top:1022.0px;font-size:34.5px;line-height:43px;color:#e5e7eb;font-weight:400;letter-spacing:0.64px;-webkit-text-stroke:0.5px #e5e7eb;">Archived Objects</div>
<div class="t" style="left:1527.5px;top:1129.1px;font-size:34.5px;line-height:43px;color:#566373;font-weight:700;letter-spacing:-0.50px;">Discovery Status</div>
<div class="t" style="left:1527.8px;top:1191.9px;font-size:34.5px;line-height:43px;color:#e5e7eb;font-weight:400;letter-spacing:-0.05px;-webkit-text-stroke:0.5px #e5e7eb;">Discovery Scores</div>
<div class="t" style="left:1527.8px;top:1254.0px;font-size:34.5px;line-height:43px;color:#e5e7eb;font-weight:400;letter-spacing:0.03px;-webkit-text-stroke:0.5px #e5e7eb;">Jobs Dashboard</div>
<div class="t" style="left:1527.8px;top:1315.8px;font-size:34.5px;line-height:43px;color:#e5e7eb;font-weight:400;letter-spacing:0.03px;-webkit-text-stroke:0.5px #e5e7eb;">Periodic Jobs</div>
<div class="t" style="left:1527.5px;top:1423.5px;font-size:34.5px;line-height:43px;color:#566373;font-weight:700;letter-spacing:0.00px;transform:scaleX(0.9249);transform-origin:0 0;">EnrichAI</div>
<div class="t" style="left:1527.8px;top:1485.3px;font-size:34.5px;line-height:43px;color:#e5e7eb;font-weight:400;letter-spacing:-0.17px;-webkit-text-stroke:0.5px #e5e7eb;">EnrichAI Data</div>
<div class="a" style="left:1510.5px;top:232.6px;width:506.5px;height:183px;border:6px solid #ee3445;border-radius:3px"></div>
</body></html>
